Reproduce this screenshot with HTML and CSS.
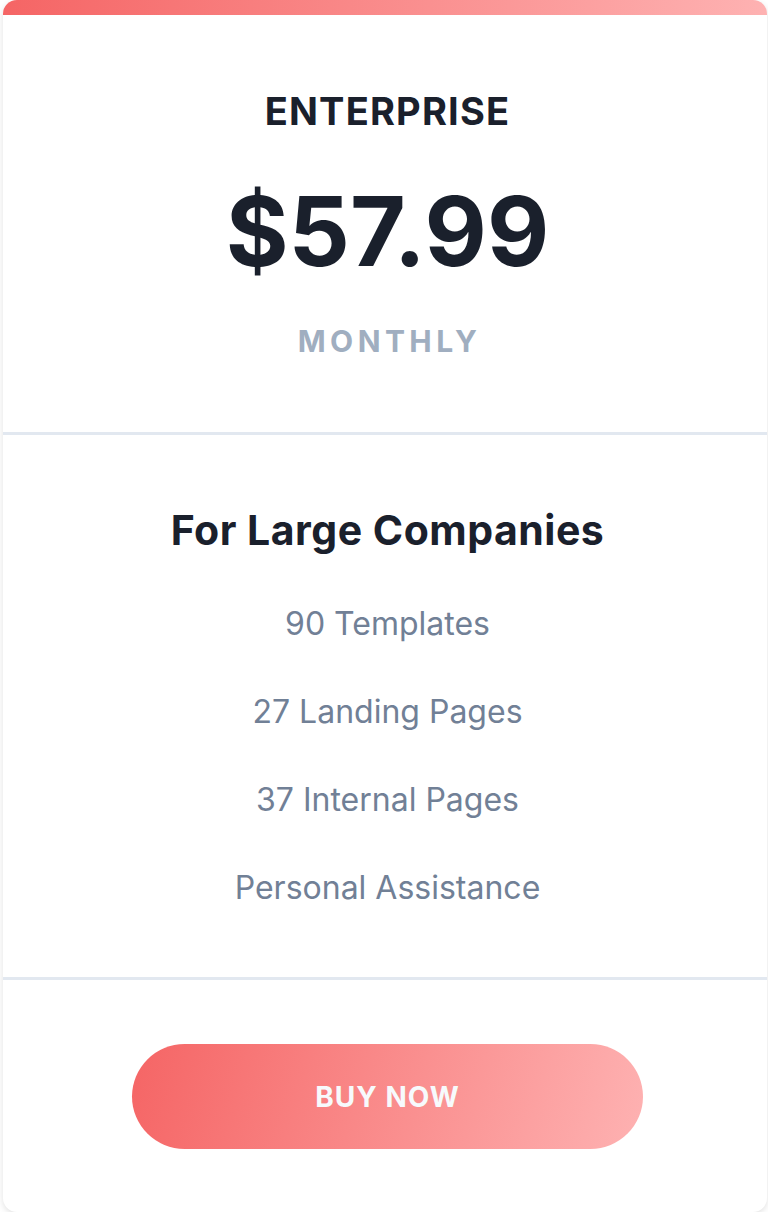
FILE: index.html
```html
<!DOCTYPE html>
<html lang="en">
<head>
<meta charset="utf-8">
<title>Enterprise plan</title>
<link rel="stylesheet" href="styles.css">
</head>
<body>
<div class="card">
  <div class="card-bar"></div>
  <div class="card-head">
    <h2 class="plan-name">ENTERPRISE</h2>
    <div class="plan-price">$57.99</div>
    <div class="plan-period">MONTHLY</div>
  </div>
  <div class="card-body">
    <h3 class="features-title">For Large Companies</h3>
    <ul class="features">
      <li>90 Templates</li>
      <li>27 Landing Pages</li>
      <li>37 Internal Pages</li>
      <li>Personal Assistance</li>
    </ul>
  </div>
  <div class="card-foot">
    <a class="buy-btn" href="#">BUY NOW</a>
  </div>
</div>
</body>
</html>
```

FILE: styles.css
```css
* { box-sizing: border-box; }
html, body { margin: 0; padding: 0; background: #ffffff; }
body {
  font-family: Inter, "Noto Sans", "Liberation Sans", sans-serif;
  color: #1a202c;
}
.card {
  margin-left: 3px;
  width: 764px;
  height: 1212px;
  background: #ffffff;
  border-radius: 14px;
  overflow: hidden;
  box-shadow: 0 2px 6px rgba(0,0,0,0.12);
  display: flex;
  flex-direction: column;
}
.card-bar {
  height: 15px;
  flex: none;
  background: linear-gradient(to right, #f56565, #feb2b2);
}
.card-head {
  height: 420px;
  flex: none;
  padding-top: 74px;
  padding-left: 5px;
  display: flex;
  flex-direction: column;
  align-items: center;
  border-bottom: 3px solid #e2e8f0;
}
.plan-name {
  margin: 0;
  font-size: 38px;
  line-height: 44px;
  font-weight: 700;
  letter-spacing: 1.2px;
  color: #1a202c;
}
.plan-price {
  margin-top: 50px;
  font-size: 96px;
  line-height: 96px;
  font-weight: 700;
  color: #1a202c;
}
.plan-period {
  margin-top: 44px;
  font-size: 30px;
  line-height: 36px;
  font-weight: 700;
  letter-spacing: 4.4px;
  padding-left: 4px;
  color: #a0aec0;
}
.card-body {
  height: 545px;
  flex: none;
  padding-top: 70px;
  padding-left: 5px;
  display: flex;
  flex-direction: column;
  align-items: center;
  border-bottom: 3px solid #e2e8f0;
}
.features-title {
  margin: 0;
  font-size: 41px;
  line-height: 50px;
  font-weight: 700;
  letter-spacing: 0.5px;
  color: #1a202c;
}
.features {
  list-style: none;
  margin: 49px 0 0;
  padding: 0;
  display: flex;
  flex-direction: column;
  align-items: center;
  gap: 48px;
}
.features li {
  font-size: 32px;
  line-height: 40px;
  color: #718096;
}
.card-foot {
  flex: 1;
  display: flex;
  justify-content: center;
  padding-top: 64px;
  padding-left: 5px;
}
.buy-btn {
  width: 511px;
  height: 105px;
  border-radius: 53px;
  background: linear-gradient(105deg, #f56565, #feb2b2);
  color: #f7fafc;
  text-decoration: none;
  font-size: 28px;
  font-weight: 700;
  letter-spacing: 1px;
  display: flex;
  align-items: center;
  justify-content: center;
}
```
